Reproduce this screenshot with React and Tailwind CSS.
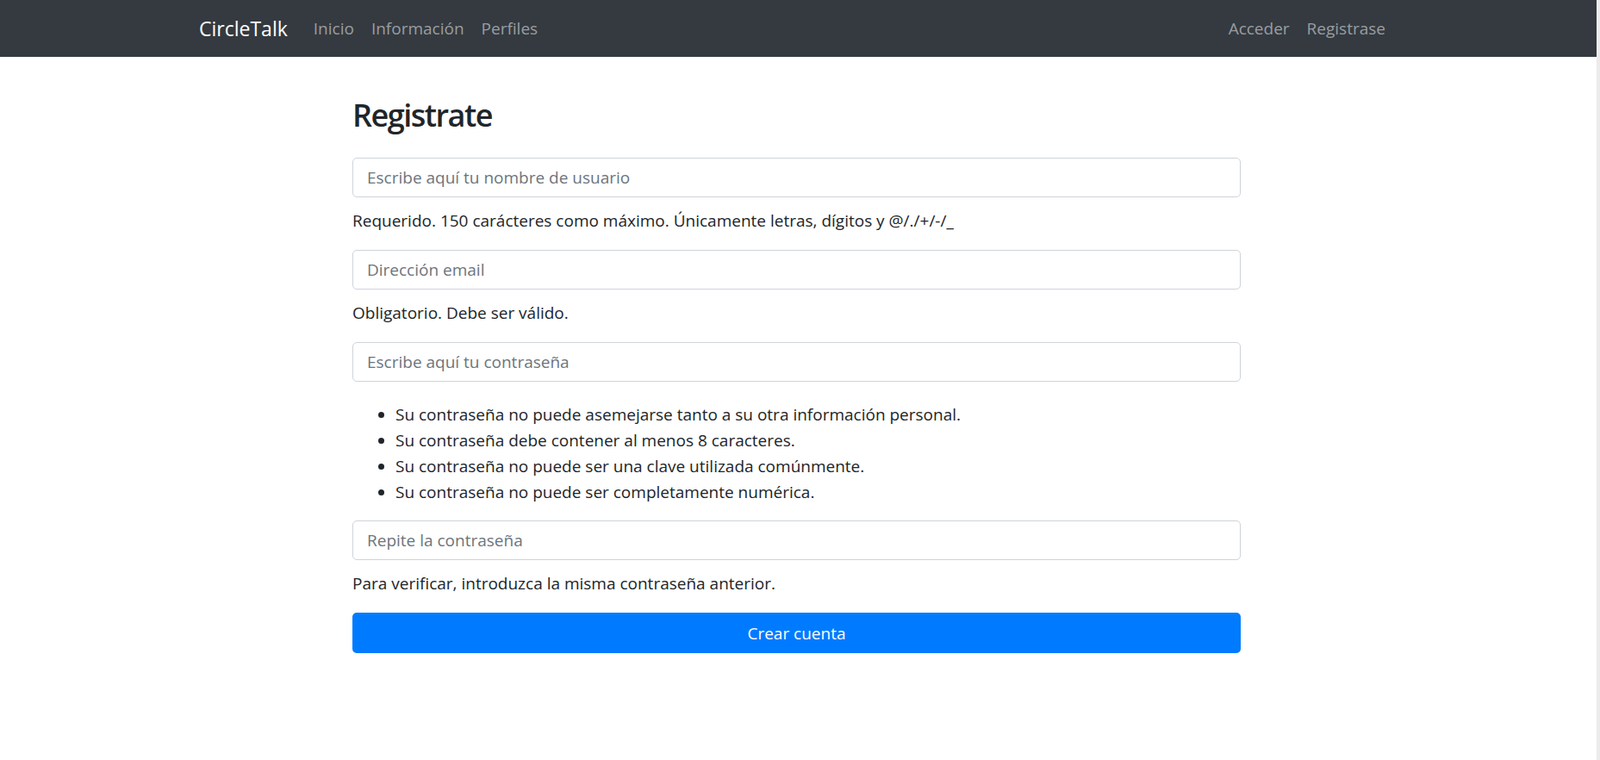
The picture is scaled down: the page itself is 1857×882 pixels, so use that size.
import React from 'react';

const fields = [
  { placeholder: 'Escribe aquí tu nombre de usuario', help: 'Requerido. 150 carácteres como máximo. Únicamente letras, dígitos y @/./+/-/_' },
  { placeholder: 'Dirección email', help: 'Obligatorio. Debe ser válido.' },
];

const rules = [
  'Su contraseña no puede asemejarse tanto a su otra información personal.',
  'Su contraseña debe contener al menos 8 caracteres.',
  'Su contraseña no puede ser una clave utilizada comúnmente.',
  'Su contraseña no puede ser completamente numérica.',
];

function Field({ placeholder, type = 'text' }) {
  return (
    <input
      type={type}
      placeholder={placeholder}
      className="block w-full h-[46px] px-[16px] text-[19px] text-[#495057] placeholder:text-[#6c757d] bg-white border border-[#ced4da] rounded-[5px] outline-none"
    />
  );
}

export default function App() {
  return (
    <div className="flex min-h-screen bg-white text-[#212529]" style={{ fontFamily: '"Open Sans", "Liberation Sans", sans-serif' }}>
      <div className="flex-1">
        <nav className="h-[66px] bg-[#343a40]">
          <div className="pr-[4px] h-full">
            <div className="w-[1425px] mx-auto px-[19px] h-full flex items-center">
              <a className="text-[23px] text-white mr-[20px]">CircleTalk</a>
              <a className="px-[10px] text-[19px] text-[#9a9da0]">Inicio</a>
              <a className="px-[10px] text-[19px] text-[#9a9da0]">Información</a>
              <a className="px-[10px] text-[19px] text-[#9a9da0]">Perfiles</a>
              <div className="ml-auto flex">
                <a className="px-[10px] text-[19px] text-[#9a9da0]">Acceder</a>
                <a className="px-[10px] text-[19px] text-[#9a9da0]">Registrase</a>
              </div>
            </div>
          </div>
        </nav>

        <div className="pr-[4px]">
          <main className="w-[1031px] mx-auto pt-[44px] pb-[60px]">
            <h1 className="text-[36px] font-semibold tracking-[-1.5px] leading-[48px] mb-[25px]">Registrate</h1>
            <form className="text-[19px] leading-[30px]">
              {fields.map((f) => (
                <div key={f.placeholder}>
                  <Field placeholder={f.placeholder} />
                  <p className="mt-[12px] mb-[19px]">{f.help}</p>
                </div>
              ))}
              <Field placeholder="Escribe aquí tu contraseña" type="password" />
              <ul className="list-disc pl-[50px] mt-[23px] mb-[18px]">
                {rules.map((r) => (
                  <li key={r}>{r}</li>
                ))}
              </ul>
              <Field placeholder="Repite la contraseña" type="password" />
              <p className="mt-[12px] mb-[19px]">Para verificar, introduzca la misma contraseña anterior.</p>
              <button type="button" className="w-full h-[47px] bg-[#007bff] text-white text-[19px] rounded-[5px]">
                Crear cuenta
              </button>
            </form>
          </main>
        </div>
      </div>
      <div className="w-[4px] bg-[#ebebeb]" />
    </div>
  );
}
